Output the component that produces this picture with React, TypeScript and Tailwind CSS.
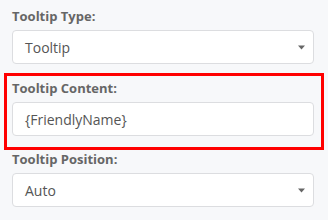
const ArrowDown = () => (
  <svg width="7" height="5" viewBox="0 0 7 5" className="shrink-0">
    <path d="M0 0.5h7L3.5 4.5z" fill="#666" />
  </svg>
)

interface FieldProps {
  label: string
  value: string
  select?: boolean
}

const Field = ({ label, value, select }: FieldProps) => {
  return (
    <div className="flex flex-col">
      <label className="h-[18px] text-[13px] leading-[18px] font-bold text-[#666]">
        {label}
      </label>
      <div className="mt-[5px] flex h-[34px] w-[302px] items-center justify-between rounded-[4px] border border-[#dcdde0] bg-white pr-[8px] pl-[12px]">
        <span className="text-[14px] text-[#555]">{value}</span>
        {select && <ArrowDown />}
      </div>
    </div>
  )
}

export default function App() {
  return (
    <div
      className="h-[220px] w-[328px] overflow-hidden bg-[#f7f8fa]"
      style={{ fontFamily: '"Open Sans", "Liberation Sans", sans-serif' }}
    >
      <div className="px-3 pt-[7px]">
        <Field label="Tooltip Type:" value="Tooltip" select />
      </div>
      <div className="mt-[9px] ml-1 w-[320px] border-[3px] border-[#ff0000] pt-[3px] pr-[7px] pb-[11px] pl-[5px]">
        <Field label="Tooltip Content:" value="{FriendlyName}" />
      </div>
      <div className="px-3">
        <Field label="Tooltip Position:" value="Auto" select />
      </div>
    </div>
  )
}
